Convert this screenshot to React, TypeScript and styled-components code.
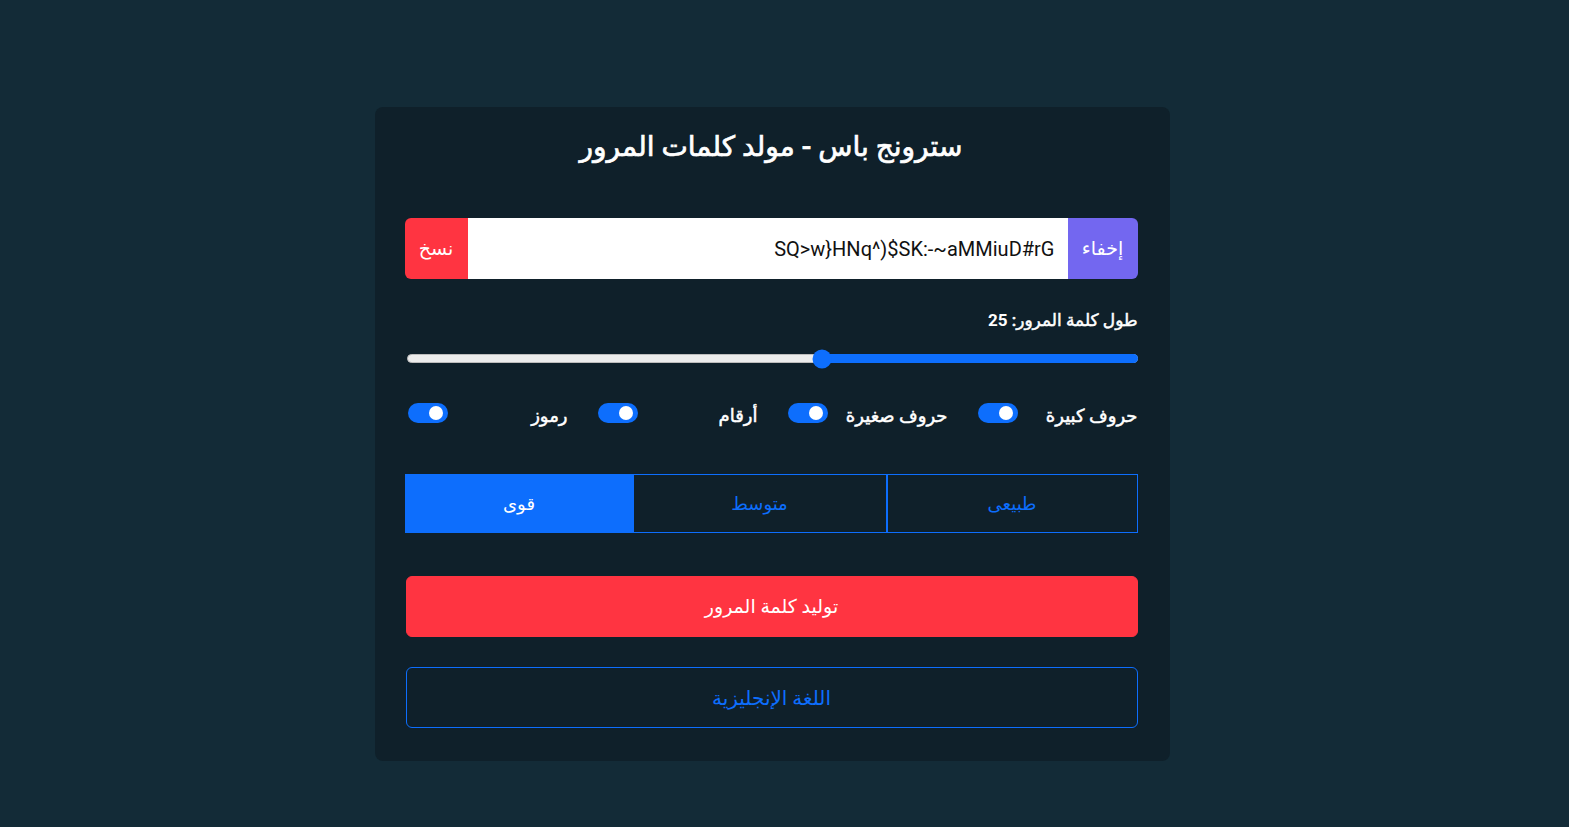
import React, { useState } from "react";
import styled, { createGlobalStyle } from "styled-components";

const GlobalStyle = createGlobalStyle`
  html, body {
    margin: 0;
    padding: 0;
    background: #132b37;
  }
  body {
    font-family: Roboto, "Noto Sans", "DejaVu Sans", sans-serif;
    color: #fff;
  }
  * { box-sizing: border-box; }
`;

const Page = styled.div`
  min-height: 827px;
  display: flex;
  justify-content: center;
  padding-top: 107px;
  padding-right: 25px;
`;

const Card = styled.div`
  width: 795px;
  height: 654px;
  background: #0f202a;
  border-radius: 8px;
  padding: 20px 32px 0 30px;
  display: flex;
  flex-direction: column;
`;

const Title = styled.h1`
  margin: 0;
  text-align: center;
  font-size: 28px;
  font-weight: 500;
  line-height: 40px;
  -webkit-text-stroke: 0.7px #fff;
`;

const InputGroup = styled.div`
  margin-top: 51px;
  display: flex;
  height: 61px;
  border-radius: 6px;
  overflow: hidden;
`;

const SideButton = styled.button<{ $bg: string; $w: number }>`
  width: ${(p) => p.$w}px;
  border: none;
  background: ${(p) => p.$bg};
  color: #fff;
  font-family: inherit;
  font-size: 19px;
  flex-shrink: 0;
`;

const PasswordField = styled.input`
  flex: 1;
  border: none;
  background: #fff;
  color: #111;
  font-family: Roboto, sans-serif;
  font-size: 20px;
  padding: 0 13px;
  text-align: right;
  outline: none;
`;

const LengthLabel = styled.div`
  margin-top: 30px;
  font-size: 17px;
  font-weight: 500;
  line-height: 22px;
  -webkit-text-stroke: 0.5px #fff;
  b { font-weight: 700; -webkit-text-stroke: 0; }
`;

const SliderTrack = styled.div`
  position: relative;
  margin-top: 23px;
  height: 9px;
  margin-left: 2px;
  border-radius: 5px;
  background: #ececec;
  border: 1px solid #bcbcbc;
`;

const SliderFill = styled.div`
  position: absolute;
  right: -1px;
  top: -1px;
  bottom: -1px;
  background: #0d6efd;
  border-radius: 5px;
`;

const SliderThumb = styled.div`
  position: absolute;
  top: 50%;
  width: 19px;
  height: 19px;
  border-radius: 50%;
  background: #0d6efd;
  transform: translate(50%, -50%);
`;

const Options = styled.div`
  margin-top: 40px;
  display: grid;
  grid-template-columns: repeat(4, 190px);
  height: 30px;
`;

const Option = styled.label`
  display: flex;
  justify-content: space-between;
  align-items: flex-start;
  padding-left: 30px;
`;

const OptionText = styled.span`
  font-size: 18px;
  font-weight: 500;
  line-height: 22px;
  margin-top: 2px;
  -webkit-text-stroke: 0.5px #fff;
`;

const Switch = styled.span<{ $on: boolean }>`
  position: relative;
  width: 40px;
  height: 20px;
  border-radius: 10px;
  background: ${(p) => (p.$on ? "#0d6efd" : "#3a4a55")};
  &::after {
    content: "";
    position: absolute;
    top: 3px;
    ${(p) => (p.$on ? "right: 5px;" : "left: 5px;")}
    width: 14px;
    height: 14px;
    border-radius: 50%;
    background: #fff;
  }
`;

const Levels = styled.div`
  margin-top: 41px;
  display: flex;
  height: 59px;
`;

const Level = styled.button<{ $active: boolean; $w: number }>`
  width: ${(p) => p.$w}px;
  border: 1px solid #0d6efd;
  margin-left: -1px;
  background: ${(p) => (p.$active ? "#0d6efd" : "transparent")};
  color: ${(p) => (p.$active ? "#fff" : "#0d6efd")};
  font-family: inherit;
  font-size: 18px;
  &:first-child { margin-left: 0; }
`;

const BigButton = styled.button<{ $outline?: boolean; $top: number }>`
  margin-top: ${(p) => p.$top}px;
  margin-left: 1px;
  height: 61px;
  border-radius: 6px;
  border: 1px solid ${(p) => (p.$outline ? "#0d6efd" : "#ff3441")};
  background: ${(p) => (p.$outline ? "transparent" : "#ff3441")};
  color: ${(p) => (p.$outline ? "#0d6efd" : "#fff")};
  font-family: inherit;
  font-size: ${(p) => (p.$outline ? 20 : 19)}px;
`;

const MIN = 6;
const MAX = 50;

export default function App() {
  const [length] = useState(25);
  const [level, setLevel] = useState("strong");
  const fraction = (length - MIN) / (MAX - MIN);
  const options = ["حروف كبيرة", "حروف صغيرة", "أرقام", "رموز"];

  return (
    <>
      <GlobalStyle />
      <Page dir="rtl">
        <Card>
          <Title>سترونج باس - مولد كلمات المرور</Title>
          <InputGroup>
            <SideButton $bg="#7367f0" $w={70}>إخفاء</SideButton>
            <PasswordField dir="ltr" readOnly value="SQ>w}HNq^)$SK:-~aMMiuD#rG" />
            <SideButton $bg="#ff3441" $w={63}>نسخ</SideButton>
          </InputGroup>
          <LengthLabel>
            طول كلمة المرور: <b>{length}</b>
          </LengthLabel>
          <SliderTrack>
            <SliderFill style={{ width: `${fraction * 100}%` }} />
            <SliderThumb style={{ right: `${fraction * 100}%` }} />
          </SliderTrack>
          <Options>
            {options.map((o) => (
              <Option key={o}>
                <OptionText>{o}</OptionText>
                <Switch $on />
              </Option>
            ))}
          </Options>
          <Levels>
            <Level $w={251} $active={level === "normal"} onClick={() => setLevel("normal")}>طبيعى</Level>
            <Level $w={254} $active={level === "medium"} onClick={() => setLevel("medium")}>متوسط</Level>
            <Level $w={229} $active={level === "strong"} onClick={() => setLevel("strong")}>قوى</Level>
          </Levels>
          <BigButton $top={43}>توليد كلمة المرور</BigButton>
          <BigButton $outline $top={30}>اللغة الإنجليزية</BigButton>
        </Card>
      </Page>
    </>
  );
}
